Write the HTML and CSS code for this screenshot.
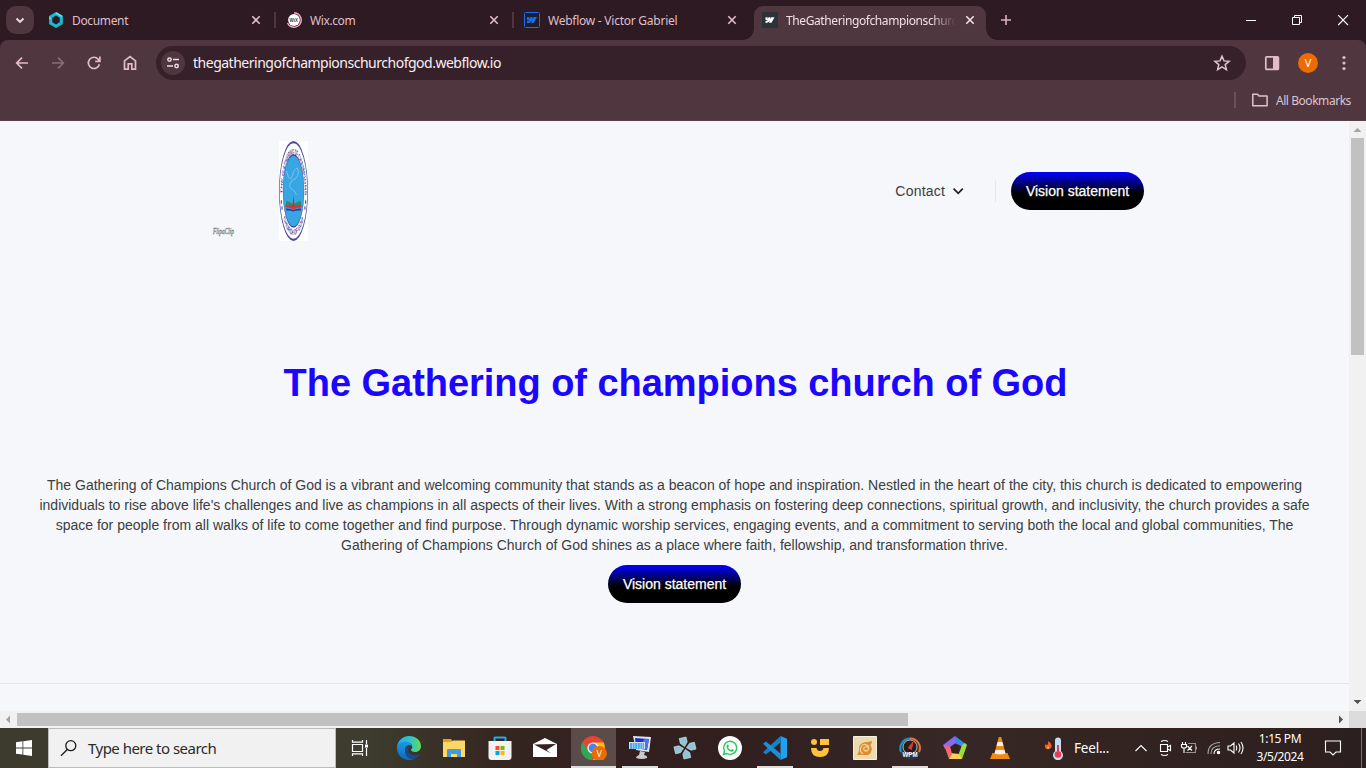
FILE: index.html
```html
<!DOCTYPE html>
<html lang="en">
<head>
<meta charset="utf-8">
<title>The Gathering of champions church of God</title>
<link rel="stylesheet" href="styles.css">
</head>
<body>
<div class="screen">
  <div class="tabbar">
    <div class="tab-search"><svg width="28" height="28" viewBox="0 0 28 28"><path d="M10.500 12.500l3.500 3.500 3.500-3.500" fill="none" stroke="#efdbe3" stroke-width="1.900"/></svg></div>
    <div class="tab">
      <svg class="fav" viewBox="0 0 16 16"><path d="M8 1.700l5.300 3.100v6.400L8 14.300 2.700 11.200V4.800z" fill="none" stroke="#18bcd0" stroke-width="3.100"/><path d="M8 .9l6 3.500M2 4.400v3" stroke="#74e1ea" stroke-width="1.300"/><path d="M2.500 4.800l5 2.200M8.500 9l5 2.500" stroke="#148da5" stroke-width=".7"/><path d="M8 4.500l3 1.800v3.500l-3 1.800-3-1.800V6.300z" fill="#2e1a22"/></svg>
      <span class="title t1">Document</span>
      <svg class="close" viewBox="0 0 16 16"><path d="M4.300 4.300l7.400 7.400m0-7.400l-7.400 7.400"/></svg>
      <i class="sep"></i>
    </div>
    <div class="tab">
      <svg class="fav" viewBox="0 0 16 16"><circle cx="8" cy="8" r="5.900" fill="#fff"/><path d="M8 .8a7.200 7.200 0 1 1-6.500 10.200" fill="none" stroke="#f5a3c0" stroke-width="1.500"/><text x="7.800" y="9.700" text-anchor="middle" font-family="Liberation Sans" font-weight="bold" font-size="4.500" fill="#444">WiX</text></svg>
      <span class="title t2">Wix.com</span>
      <svg class="close" viewBox="0 0 16 16"><path d="M4.300 4.300l7.400 7.400m0-7.400l-7.400 7.400"/></svg>
      <i class="sep"></i>
    </div>
    <div class="tab">
      <svg class="fav" viewBox="0 0 16 16"><rect x=".5" y=".5" width="15" height="15" rx="1" fill="#211c2c" stroke="#146ef5"/><path d="M13 5l-3.300 6H7l1.100-2.300C7 10.200 5.500 11 3 11.200V9c1.700 0 2.500-.8 2.500-.8H3V5h2.300v2L6.500 5h1.900v2l1.100-2z" fill="#146ef5"/></svg>
      <span class="title t3">Webflow - Victor Gabriel</span>
      <svg class="close" viewBox="0 0 16 16"><path d="M4.300 4.300l7.400 7.400m0-7.400l-7.400 7.400"/></svg>
    </div>
    <div class="tab active">
      <svg class="fav" viewBox="0 0 16 16"><path d="M0 0h16v16H0z" fill="#2b3338"/><path d="M12.500 5.200L9.500 10.700H7l1-2c-1 1.300-2.300 2-4.500 2.200v-2c1.400 0 2.200-.8 2.200-.8H3.500V5.200h2.100v1.700l1.100-1.700h1.700v1.700l1-1.700z" fill="#fff"/></svg>
      <span class="title t4">TheGatheringofchampionschurc</span>
      <svg class="close" viewBox="0 0 16 16"><path d="M4.300 4.300l7.400 7.400m0-7.400l-7.400 7.400"/></svg>
    </div>
    <svg class="newtab" viewBox="0 0 40 40"><path d="M20 15v10M15 20h10" stroke="#d7b2c2" stroke-width="1.600"/></svg>
    <div class="winbtns">
      <svg viewBox="0 0 46 40"><path d="M18 20.500h10"/></svg>
      <svg viewBox="0 0 46 40"><path d="M18.500 17.500h7v7h-7zM20.500 17.500v-2h7v7h-2"/></svg>
      <svg viewBox="0 0 46 40"><path d="M18.200 15.200l9.800 9.800M28 15.200L18.200 25" stroke-width="1.100"/></svg>
    </div>
  </div>

  <div class="chrome">
    <div class="toolbar">
      <svg class="tb" viewBox="0 0 36 36"><path d="M24 18H13M18 12.700L12.700 18l5.300 5.300"/></svg>
      <svg class="tb dim" viewBox="0 0 36 36"><path d="M12 18h11M18 12.700l5.300 5.300-5.300 5.300"/></svg>
      <svg class="tb" viewBox="0 0 36 36"><path d="M23.400 19.200a5.600 5.600 0 1 1-1.200-5l1.500 1.600M23.900 11.600v4.700h-4.700"/></svg>
      <svg class="tb" viewBox="0 0 36 36"><path d="M12.500 24.100v-8.300L18 11.600l5.500 4.200v8.300h-3.700v-5.300h-3.600v5.300z"/></svg>
      <div class="omnibox">
        <svg class="site" viewBox="0 0 24 24"><circle cx="12" cy="12" r="12" fill="#4f363f"/><g fill="none" stroke="#efdbe3" stroke-width="1.500"><circle cx="8.500" cy="8.600" r="1.700"/><path d="M12 8.600h6M6 15h6"/><circle cx="15.600" cy="15" r="1.700"/></g></svg>
        <span class="url">thegatheringofchampionschurchofgod.webflow.io</span>
        <svg class="star" viewBox="0 0 20 20"><path d="M10 3.200l2 4.700 5.100.4-3.900 3.300 1.200 5L10 13.900l-4.400 2.700 1.200-5-3.900-3.300 5.100-.4z" fill="none" stroke="#dcc5ce" stroke-width="1.500"/></svg>
      </div>
      <svg class="tb side" viewBox="0 0 36 36"><rect x="11.800" y="11.800" width="12.600" height="12.600" rx="1"/><path d="M19 12h5.500v12.300H19z" fill="#e3bccb" stroke="none"/></svg>
      <div class="avatar">V</div>
      <svg class="tb more" viewBox="0 0 36 36"><g fill="#e3bccb" stroke="none"><circle cx="18" cy="12.500" r="1.600"/><circle cx="18" cy="18" r="1.600"/><circle cx="18" cy="23.500" r="1.600"/></g></svg>
    </div>
    <div class="bookmarks">
      <i class="bsep"></i>
      <svg width="18" height="14" viewBox="0 0 18 14"><path d="M1.800 1.200h4.700l1.600 1.800h8v9.800H1.800z" fill="none" stroke="#dcc5ce" stroke-width="1.500" stroke-linejoin="round"/></svg>
      <span>All Bookmarks</span>
    </div>
  </div>

  <div class="view">
    <main class="page">
      <header class="nav">
        <div class="brand">
          <span class="mark">FlipaClip</span>
          <svg class="logo" viewBox="0 0 100 100" preserveAspectRatio="none" aria-label="Church logo">
            <defs><path id="ring-top" d="M11 53A39 39 0 1 1 89 53"/><path id="ring-bottom" d="M13.500 75A44.500 44.500 0 0 0 86.500 75"/></defs>
            <path d="M0 0h100v100H0z" fill="#fff"/>
            <circle cx="50" cy="50" r="48.800" fill="#fff" stroke="#4a4a9c" stroke-width="2.200"/>
            <circle cx="50" cy="50" r="36" fill="#39a6e4" stroke="#3e4b9c" stroke-width="1.500"/>
            <g font-family="Liberation Sans" font-weight="bold" fill="#3d3d92"><text font-size="9" textLength="124" lengthAdjust="spacingAndGlyphs"><textPath href="#ring-top">THE GATHERING OF CHAMPIONS</textPath></text><text font-size="8" textLength="78" lengthAdjust="spacingAndGlyphs"><textPath href="#ring-bottom" startOffset="3">CHURCH OF GOD</textPath></text></g>
            <g fill="#3d3d92"><circle cx="8" cy="61" r="2"/><circle cx="10.500" cy="67" r="2"/><circle cx="92" cy="61" r="2"/><circle cx="89.500" cy="67" r="2"/></g>
            <g transform="scale(3.448 1)">
              <path d="M8.500 33q2 8 5 2 1-7 5-8 2 4 0 8-2 4-5 4-3 3-3 7 3 3 5 4l2 4M8.500 33l-1-3" fill="none" stroke="#9ad5f5" stroke-width=".6"/>
              <path d="M7 60q4 0 7.500 4 3.500-4 7.500-4v4q-4 0-7.500 3Q11 64 7 64z" fill="#25906b"/>
              <path d="M6.500 64q4-1 8 2 4-3 8-2v2.500q-4-.5-8 2-4-2.500-8-2z" fill="#e52e3d"/>
              <path d="M7 67.500q4-.5 7.500 1.500 3.500-2 7.500-1.500v2q-4-.5-7.500 1-3.500-1.500-7.500-1z" fill="#353b91"/>
              <path d="M14.500 54l1.200 12h-2.400z" fill="#c52c40"/>
            </g>
          </svg>
        </div>
        <nav class="links">
          <span class="contact">Contact</span>
          <svg class="caret" width="12" height="8" viewBox="0 0 12 8"><path d="M1.600 1.700L6.200 6.300l4.600-4.600" fill="none" stroke="#222" stroke-width="1.800"/></svg>
          <i class="vr"></i>
          <a class="btn">Vision statement</a>
        </nav>
      </header>
      <section class="hero">
        <h1>The Gathering of champions church of God</h1>
        <p>The Gathering of Champions Church of God is a vibrant and welcoming community that stands as a beacon of hope and inspiration. Nestled in the heart of the city, this church is dedicated to empowering<br>individuals to rise above life's challenges and live as champions in all aspects of their lives. With a strong emphasis on fostering deep connections, spiritual growth, and inclusivity, the church provides a safe<br>space for people from all walks of life to come together and find purpose. Through dynamic worship services, engaging events, and a commitment to serving both the local and global communities, The<br>Gathering of Champions Church of God shines as a place where faith, fellowship, and transformation thrive.</p>
        <a class="btn">Vision statement</a>
      </section>
    </main>
    <div class="vscroll">
      <svg width="17" height="17" viewBox="0 0 17 17"><path d="M4.500 11h8l-4-4z" fill="#a3a3a3"/></svg>
      <i class="vthumb"></i>
      <svg width="17" height="17" viewBox="0 0 17 17"><path d="M4.500 6h8l-4 4z" fill="#505050"/></svg>
    </div>
    <div class="hscroll">
      <svg width="17" height="17" viewBox="0 0 17 17"><path d="M10 4.500v8l-4-4z" fill="#a3a3a3"/></svg>
      <i class="hthumb"></i>
      <svg width="17" height="17" viewBox="0 0 17 17"><path d="M7 4.500v8l4-4z" fill="#505050"/></svg>
    </div>
    <div class="corner"></div>
  </div>

  <footer class="taskbar">
    <div class="start"><svg width="16" height="16" viewBox="0 0 16 16"><path d="M0 2.200L6.500 1.300v6.200H0zM7.300 1.200L16 0v7.500H7.300zM0 8.400h6.500v6.200L0 13.700zM7.300 8.400H16V16l-8.700-1.200z" fill="#fff"/></svg></div>
    <div class="search"><svg width="18" height="18" viewBox="0 0 18 18"><circle cx="10.800" cy="6.700" r="5" fill="none" stroke="#1b1b1b" stroke-width="1.300"/><path d="M7.300 10.500L1 16.700" stroke="#1b1b1b" stroke-width="1.300"/></svg><span>Type here to search</span></div>
    <div class="apps">
      <div class="app task-view"><svg viewBox="0 0 24 24"><g fill="none" stroke="#fff" stroke-width="1.200"><path d="M4.500 8.500h10v7h-10zM4.500 4v2.200h10V4M4.500 20v-2.200h10V20M18.500 4v4M18.500 12v8"/></g><path d="M17 8.500h3v3h-3z" fill="#fff"/></svg></div>
      <div class="app"><svg viewBox="0 0 24 24"><defs><linearGradient id="edge-a" x1="0" x2="1"><stop stop-color="#25aee8"/><stop offset=".55" stop-color="#31c4c9"/><stop offset="1" stop-color="#65da55"/></linearGradient><linearGradient id="edge-b" y1="0" y2="1" x2="0"><stop stop-color="#1b9ce5"/><stop offset="1" stop-color="#1265ba"/></linearGradient></defs><path d="M0 11C1 4 6 0 12 0c7 0 12 4.500 12 10 0 4-3 6-6 6-2 0-4-.7-4-2 0-1 1.300-1.300 1.300-3.200C15 8 12 6 8.500 6 4.500 6 1 8.500 0 11z" fill="url(#edge-a)"/><path d="M0 12c0-4 4-6.500 8.500-6.500 4 0 6.500 2.500 6.800 5-2-2.500-7.300-1.500-7.300 3.500 0 5 4 9 9 9-1.500.7-3 1-5 1-7 0-12-5.500-12-12z" fill="url(#edge-b)"/><path d="M8.500 12C6.500 18 11 24 17 23c2.500-.6 5-2.800 6-5.200-4 2.200-9 1.700-11-1-1.500-2-.9-4.300.5-5.800-1.500-.7-3-.3-4 1z" fill="#174b8b"/></svg></div>
      <div class="app nudge"><svg viewBox="0 0 24 24"><path d="M1 3h8l2 3v4H1z" fill="#e5a020"/><path d="M1 6h8l2-1.500h12V21H1z" fill="#ffd764"/><path d="M5 21v-7q0-1 1-1h12q1 0 1 1v7h-4v-3H9v3z" fill="#3f9ce0"/></svg></div>
      <div class="app"><svg viewBox="0 0 24 24"><path d="M6.500 6V2q0-.5.5-.5h10q.5 0 .5.5v4" fill="none" stroke="#25a9eb" stroke-width="2"/><path d="M.5 5h23v16q0 3-3 3h-17q-3 0-3-3z" fill="#f2f2f2"/><path d="M7.500 10h4v4h-4z" fill="#f25022"/><path d="M12.500 10h4v4h-4z" fill="#7fba00"/><path d="M7.500 15h4v4h-4z" fill="#00a4ef"/><path d="M12.500 15h4v4h-4z" fill="#ffb900"/></svg></div>
      <div class="app nudge"><svg viewBox="0 0 24 24"><path d="M0 8l12-6 12 6v13H0z" fill="#fff"/><path d="M1 8.500L23 8l-9.500 6 4.500 3.500z" fill="#33211f"/></svg></div>
      <div class="app on open"><svg class="wide" viewBox="0 0 26 24"><circle cx="12" cy="12" r="12" fill="#ea4335"/><path d="M1.600 6L7 15l5 2.500L11 24C4 24 0 18 0 12c0-2 .6-4.500 1.600-6z" fill="#2fa852"/><path d="M12 6.500h10.700C26 14 21 24 12 24l5-9z" fill="#fbc116"/><circle cx="12" cy="12" r="5.600" fill="#fff"/><circle cx="12" cy="12" r="4.400" fill="#4285f4"/><circle cx="18.300" cy="17.500" r="7.600" fill="#ed6b00"/><text x="18.300" y="21" text-anchor="middle" font-family="Open Sans" font-size="9" fill="#fff">V</text></svg></div>
      <div class="app open short"><svg viewBox="0 0 24 24"><path d="M5 0l18 1-2 15-13-2z" fill="#dfe7ee"/><path d="M7 2l14 1-2 11-11-2z" fill="#1c2bc9"/><path d="M16 3l5 .3-2 10.200-7-1z" fill="#4d75e8"/><path d="M1 6h16v7H1z" fill="#c9e4fa"/><path d="M2 8h14M2 10h14M2 12h14" stroke="#2e91e3" stroke-width="1.300" stroke-dasharray="2 .6"/><path d="M12 15l5 1-1 3q4 1 3 3-5 2-11 0 0-2 3-3z" fill="#c9c9cc"/></svg></div>
      <div class="app"><svg viewBox="0 0 24 24"><g fill="#91c4d6" stroke="#cce7ee" stroke-width=".6" transform="rotate(-13 12 12)"><path d="M8.500 1.500h7v5L12 10.500l-3.500-4z"/><path d="M22.500 8.500v7h-5L13.500 12l4-3.500zM15.500 22.500h-7v-5l3.500-4 3.500 4zM1.500 15.500v-7h5l4 3.500-4 3.500z"/></g></svg></div>
      <div class="app"><svg viewBox="0 0 24 24"><circle cx="12" cy="12" r="12" fill="#fff"/><path d="M5.500 18.500l1-3.500a6.500 6.500 0 1 1 2.500 2.500z" fill="none" stroke="#25c95d" stroke-width="1.400"/><path d="M10 8.200l1 2-1 1.200q1 2 3 2.700l1.100-1 1.900 1q-.5 2-2.500 1.700-4.500-1-5-5.500.2-1.500 1.500-2.100z" fill="#25c95d"/></svg></div>
      <div class="app open short"><svg viewBox="0 0 24 24"><path d="M17.500 0L24 2.800v18.400L17.500 24z" fill="#22a0ee"/><path d="M17.500 0v6.500L3 18.500l-3-2.200z" fill="#1480c8"/><path d="M17.500 24v-6.500L3 5.500 0 7.700z" fill="#1a8ed8"/></svg></div>
      <div class="app"><svg viewBox="0 0 24 24"><g fill="#ffc13b"><circle cx="6" cy="6" r="3"/><path d="M12 3h9v6h-9zM3 12h5.500q.5 3 3.500 3t3.500-3H21q0 9-9 9t-9-9z"/></g></svg></div>
      <div class="app"><svg viewBox="0 0 24 24"><path d="M.5.500h23v23H.5z" fill="#eadcae" stroke="#f7f1dc"/><path d="M4 19q3-5 2-8 2-5 8-5 2 0 5-1 0 3-2 4 3 3 1 7-1 3-4 3z" fill="#e18a32"/><path d="M15 12q-1-2-3-1t-1 3q2 2 4 0 2-3-1-5-4-2-6 2t2 7" fill="none" stroke="#f0d494" stroke-width="1.200"/></svg></div>
      <div class="app open short"><svg viewBox="0 0 24 24"><circle cx="12" cy="12" r="11.500" fill="#333"/><path d="M3 16A10 10 0 0 1 12 2.500" fill="none" stroke="#1397d6" stroke-width="2"/><path d="M12 2.500A9.500 9.500 0 0 1 21 16" fill="none" stroke="#eb7130" stroke-width="2"/><circle cx="12" cy="11" r="7" fill="#202020" stroke="#ddd" stroke-width=".8"/><path d="M16 4l-2.300 10-4-2z" fill="#f02f2e"/><text x="12" y="21" text-anchor="middle" textLength="15" lengthAdjust="spacingAndGlyphs" font-family="Liberation Sans" font-weight="bold" font-size="6.500" fill="#fff">WPM</text></svg></div>
      <div class="app"><svg viewBox="0 0 24 24"><path d="M12 0L0 9l2 4 8-3 3-3z" fill="#8a68f5"/><path d="M12 0l12 9-4 2-8-4z" fill="#3b88ed"/><path d="M24 9l-5 14-4-3 4-11 3-2z" fill="#9bdd3b"/><path d="M19 23H6l1-6 9 1z" fill="#ffd351"/><path d="M6 23L1 9l7 2 1 7z" fill="#f06a66"/><path d="M12 7.500l4.800 3.500-1.900 5.800H9.100L7.200 11z" fill="#33211f"/></svg></div>
      <div class="app"><svg viewBox="0 0 24 24"><path d="M4.500 17h15l2.500 6H2z" fill="#f28a10"/><path d="M10.800 1h2.400L18 19q-6 3-12 0z" fill="#f28a10"/><path d="M9.600 6h4.800l1 4H8.600zM7.500 14h9l.9 3.500q-5.500 2-10.800 0z" fill="#f4f1ec"/></svg></div>
    </div>
    <div class="weather"><svg width="20" height="24" viewBox="0 0 20 24"><path d="M4.500 5q4 3 3 6-2 3-5 2-3-2-.5-5 0 1 1.500 1 .5-2 1-4z" fill="#f0622a"/><path d="M4 10q2 1.500.5 3-2 0-.5-3z" fill="#ffc84a"/><path d="M11 4.500a3 3 0 0 1 6 0v10.700a5 5 0 1 1-6 0z" fill="#c5dcf2"/><circle cx="14" cy="18.500" r="3.300" fill="#e83b54"/><path d="M14 18V9" stroke="#e83b54" stroke-width="2"/></svg><span>Feel...</span></div>
    <div class="tray">
      <svg class="up" viewBox="0 0 14 10"><path d="M1.500 8L7 2.500 12.500 8"/></svg>
      <svg class="cam" viewBox="0 0 14 18"><path d="M2.500 5.500h7v7h-7zM9.500 8l3-1.500v5l-3-1.500M3 2.500q3.500-2 7 0M3 15.500q3.500 2 7 0"/></svg>
      <svg class="bat" viewBox="0 0 17 14"><path d="M2.500 1v2.500M5.500 1v2.500M1.500 3.500h5v2q0 1.500-2.500 1.500t-2.500-1.500zM4 7v5M7.500 5l4.500 4.500M12 5L7.500 9.500"/><path d="M8 2.500h7.500v9H5.500M16.500 5.500v3" stroke="#9a9292"/></svg>
      <svg class="wifi" viewBox="0 0 14 14"><g stroke="#aaa"><path d="M1 13Q1 2 13 1.500"/><path d="M4 13q0-8 9-8.200"/></g><path d="M7 13q0-5 6-5"/><circle cx="11.500" cy="11.500" r="1.200" fill="#fff"/></svg>
      <svg class="vol" viewBox="0 0 17 14"><path d="M1 5v4h2.500L7 12V2L3.500 5zM9 4.500q1.500 2.500 0 5M11.500 2.500q3 4.500 0 9M14 1q4 6 0 12"/></svg>
    </div>
    <div class="clock"><span>1:15 PM</span><span>3/5/2024</span></div>
    <svg class="note" viewBox="0 0 18 18"><path d="M1.500 2h15v11H12l-3 3-3-3H1.500z" fill="none" stroke="#fff" stroke-width="1.100"/></svg>
    <i class="peek"></i>
  </footer>
</div>
</body>
</html>
```
FILE: styles.css
```css
* { box-sizing: border-box; }
body { margin: 0; overflow: hidden; font-family: "Noto Sans", sans-serif; }
svg { display: block; flex: none; }
.screen { width: 1366px; height: 768px; display: flex; flex-direction: column; }

.tabbar { position: relative; z-index: 1; height: 40px; background: #2e1a22; display: flex; padding-left: 6px; }
.tab-search { width: 28px; height: 28px; margin: 6px 6px 0 0; border-radius: 10px; background: #4f363f; }
.tab { position: relative; width: 238px; height: 34px; margin-top: 6px; padding: 0 0 6px 8px; display: flex; align-items: center; }
.fav { width: 16px; height: 16px; margin-right: 8px; }
.title { flex: none; width: 170px; margin-right: 6px; padding-top: 2px; font-size: 12px; color: #dfbfcc; white-space: nowrap; line-height: 18px; }
.t1 { letter-spacing: -.35px; }
.t2 { letter-spacing: -.4px; }
.t3 { letter-spacing: -.25px; }
.t4 { letter-spacing: -.4px; }
.close { width: 16px; height: 16px; fill: none; stroke: #dfbfcc; stroke-width: 1.6; }
.sep { width: 2px; height: 16px; background: #4f363f; margin-left: 10px; }
.active { width: 232px; background: #4f363f; border-radius: 9px 9px 0 0; }
.active::before, .active::after { content: ""; position: absolute; bottom: 0; width: 11px; height: 11px; }
.active::before { left: -11px; background: radial-gradient(circle at 0 0, transparent 10.5px, #4f363f 11px); }
.active::after { right: -11px; background: radial-gradient(circle at 100% 0, transparent 10.5px, #4f363f 11px); }
.active .title { color: #f3dfe7; -webkit-mask-image: linear-gradient(90deg, #000 145px, transparent 170px); }
.active .close { stroke: #f3dfe7; }
.newtab { width: 40px; height: 40px; }
.winbtns { display: flex; margin-left: auto; }
.winbtns svg { width: 46px; height: 40px; fill: none; stroke: #fff; }

.chrome { position: relative; height: 81px; background: linear-gradient(#4f363f 80px, #584149 80px); border-radius: 8px 8px 0 0; box-shadow: 0 -8px 0 #2e1a22; }
.screen { background: #2e1a22; }
.toolbar { height: 46px; display: flex; align-items: center; padding-left: 4px; }
.tb { width: 36px; height: 36px; fill: none; stroke: #e3bccb; stroke-width: 1.7; }
.dim { stroke: #8b6d79; }
.omnibox { width: 1090px; height: 34px; margin-left: 8px; background: #36212a; border-radius: 17px; display: flex; align-items: center; padding: 0 14px 0 5px; }
.site { width: 24px; height: 24px; }
.url { font-size: 14px; letter-spacing: -.49px; margin-left: 8px; color: #fbeef3; line-height: 20px; white-space: nowrap; flex: 1; }
.star { width: 20px; height: 20px; }
.side { margin-left: 8px; }
.avatar { width: 20px; height: 20px; margin: 0 8px; border-radius: 50%; background: #ed6b00; color: #fff; font-size: 11px; line-height: 20px; text-align: center; }
.bookmarks { height: 34px; display: flex; align-items: center; justify-content: flex-end; padding: 0 15px 6px 0; font-size: 12px; color: #dcc5ce; }
.bookmarks span { margin-left: 7px; white-space: nowrap; width: 75px; letter-spacing: -.45px; }
.bsep { width: 2px; height: 16px; background: #6b505b; margin-right: 15px; }

.view { height: 607px; display: grid; grid-template: 590px 17px / 1349px 17px; }
.page { background: #f5f7fb; font-family: "Liberation Sans", Arial, sans-serif; overflow: hidden; font-size: 14px; line-height: 20px; color: #3c3d40; }
.nav { height: 140px; padding: 0 205px 0 213px; display: flex; align-items: center; justify-content: space-between; }
.brand { display: flex; align-items: center; }
.mark { width: 66px; font: italic 9px/10px "Liberation Serif", serif; color: #777; -webkit-text-stroke: .3px #777; transform: translateY(40px) scaleX(.6); transform-origin: left; }
.logo { width: 29px; height: 100px; }
.links { display: flex; align-items: center; }
.caret { margin: 0 31px 0 7px; }
.contact { letter-spacing: .2px; }
.vr { width: 1px; height: 22px; background: #e5e7eb; margin-right: 15px; }
.btn { display: inline-block; width: 133px; height: 38px; line-height: 38px; border-radius: 19px; text-align: center; color: #fff; background: linear-gradient(#00f, #000 57%); -webkit-text-stroke: .25px #fff; }
.hero { height: 423px; border-bottom: 1px solid #e4e6ec; text-align: center; padding-top: 97px; }
.hero h1 { margin: 0; padding-left: 2px; font-size: 38px; line-height: 50px; letter-spacing: -.04px; color: #1b06ff; font-weight: bold; }
.hero p { margin: 67px 0 10px; white-space: nowrap; }

.vscroll { background: #f1f1f1; display: flex; flex-direction: column; }
.vthumb { height: 217px; width: 13px; margin: 0 2px auto; background: #c1c1c1; }
.hscroll { background: #f1f1f1; display: flex; }
.hthumb { width: 891px; height: 13px; margin: 2px auto 2px 0; background: #c1c1c1; }
.corner { background: #dcdcdc; }

.taskbar { height: 40px; display: flex; align-items: center; background: linear-gradient(90deg, #3c3b2d 0, #3d3c2f 370px, #35261f 500px, #321f20 620px, #31201f 760px, #372827 950px, #332421 1100px, #2c1f1f 1366px); color: #fff; }
.start { width: 48px; display: flex; justify-content: center; }
.search { width: 288px; height: 40px; border: 1px solid #bbb; background: #f1f1f1; color: #2b2b2b; display: flex; align-items: center; padding-left: 11px; font-size: 15px; }
.search span { margin-left: 10px; letter-spacing: -.52px; white-space: nowrap; }
.apps { display: flex; padding-left: 1px; }
.app { width: 45px; height: 40px; display: flex; align-items: center; justify-content: center; }
.app svg { width: 24px; height: 24px; }
.app .wide { width: 26px; }
.task-view { margin-right: 4px; }
.nudge { margin-right: 1px; }
.on { background: #5b4b4b; margin: 0 1px 0 3px; }
.open { box-shadow: inset 0 -2px #ddd; }
.short { box-shadow: none; background: linear-gradient(#ddd, #ddd) center bottom / 36px 2px no-repeat; }
.weather { display: flex; align-items: center; width: 90px; margin-left: 22px; }
.weather span { margin-left: 10px; font-size: 13.5px; letter-spacing: -.2px; }
.tray { display: flex; align-items: center; width: 114px; }
.tray svg { fill: none; stroke: #fff; stroke-width: 1.1; }
.up { width: 14px; height: 10px; margin-right: 10px; }
.cam { width: 14px; height: 18px; margin-right: 8px; }
.bat { width: 17px; height: 14px; margin-right: 10px; }
.wifi { width: 14px; height: 14px; margin-right: 6px; }
.vol { width: 17px; height: 14px; }
.clock { width: 64px; display: flex; flex-direction: column; align-items: center; font-size: 12px; line-height: 18px; letter-spacing: -.4px; }
.note { width: 18px; height: 18px; margin-left: 12px; }
.peek { width: 1px; height: 40px; background: #78706f; margin-left: auto; margin-right: 4px; }
```
